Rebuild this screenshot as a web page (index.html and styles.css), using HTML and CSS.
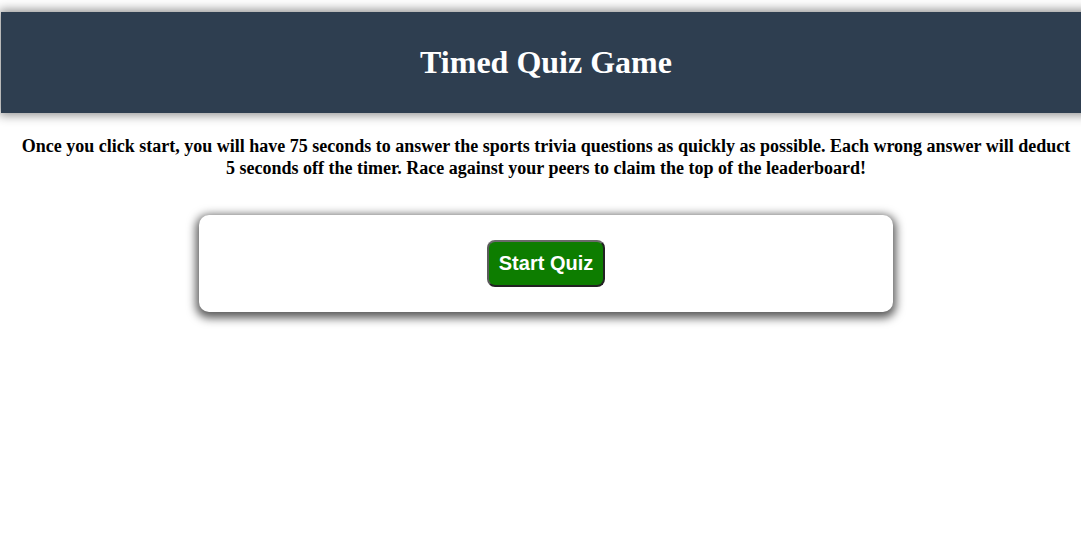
FILE: index.html
```html
<!DOCTYPE html>
<html lang="en">
<head>
<meta charset="utf-8">
<title>Timed Quiz Game</title>
<link rel="stylesheet" href="styles.css">
</head>
<body>
<div class="page">
  <header class="banner">
    <h1 class="title">Timed Quiz Game</h1>
  </header>
  <p class="intro">Once you click start, you will have 75 seconds to answer the sports trivia questions as quickly as possible. Each wrong answer will deduct 5 seconds off the timer. Race against your peers to claim the top of the leaderboard!</p>
  <section class="card">
    <button class="start-btn" type="button">Start Quiz</button>
  </section>
</div>
</body>
</html>
```

FILE: styles.css
```css
html {
  overflow: hidden;
}

body {
  margin: 0;
  padding: 0;
  background: #ffffff;
}

.page {
  width: 1090px;
  margin-left: 1px;
  padding: 12px 0 60px;
  font-family: "Liberation Serif", "Times New Roman", serif;
}

.banner {
  background: #2e3e50;
  box-shadow: 0 0 10px 2px rgba(0, 0, 0, 0.45);
  padding: 31px 0 32px;
  text-align: center;
}

.title {
  margin: 0;
  color: #ffffff;
  font-size: 32px;
  line-height: 38px;
  font-weight: bold;
}

.intro {
  margin: 22px 0 0;
  padding: 0 18px;
  text-align: center;
  font-size: 18px;
  line-height: 22px;
  font-weight: bold;
  color: #000000;
}

.card {
  width: 694px;
  height: 97px;
  box-sizing: border-box;
  margin: 36px auto 0;
  background: #ffffff;
  border-radius: 10px;
  box-shadow: 0 3px 10px 3px rgba(0, 0, 0, 0.65);
  display: flex;
  align-items: center;
  justify-content: center;
}

.start-btn {
  font-family: "Liberation Sans", Arial, sans-serif;
  font-size: 20px;
  font-weight: bold;
  line-height: 23px;
  color: #ffffff;
  background: #0d7d00;
  border: 2px solid #222222;
  border-top-color: #6a6a6a;
  border-left-color: #5a5a5a;
  border-radius: 8px;
  padding: 10px 10px;
  cursor: pointer;
}
```
